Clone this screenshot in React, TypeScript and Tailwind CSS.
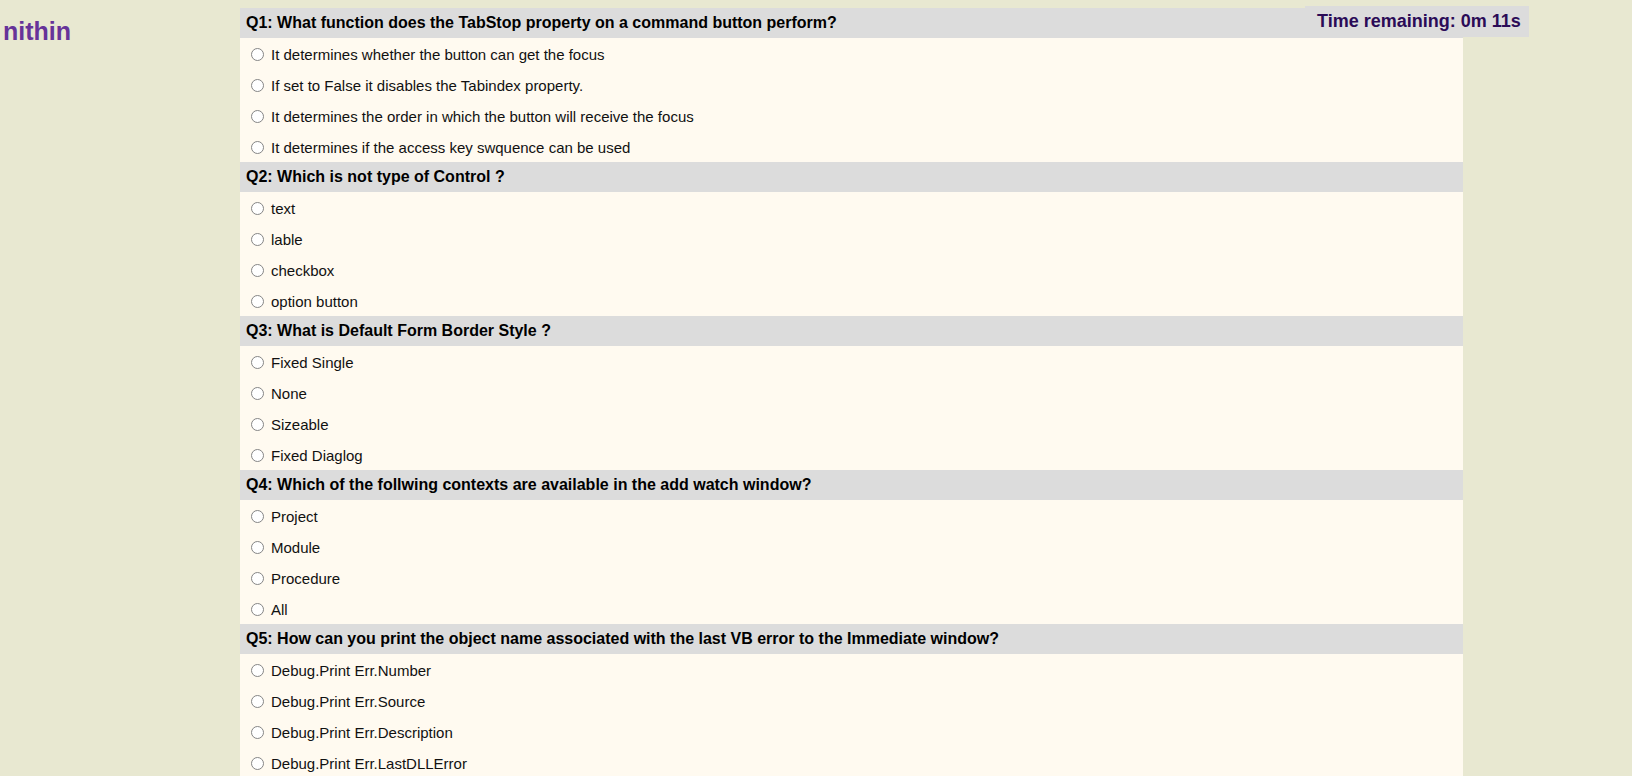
import React from "react";

const questions: { q: string; opts: string[] }[] = [
  {
    q: "Q1: What function does the TabStop property on a command button perform?",
    opts: [
      "It determines whether the button can get the focus",
      "If set to False it disables the Tabindex property.",
      "It determines the order in which the button will receive the focus",
      "It determines if the access key swquence can be used",
    ],
  },
  { q: "Q2: Which is not type of Control ?", opts: ["text", "lable", "checkbox", "option button"] },
  { q: "Q3: What is Default Form Border Style ?", opts: ["Fixed Single", "None", "Sizeable", "Fixed Diaglog"] },
  {
    q: "Q4: Which of the follwing contexts are available in the add watch window?",
    opts: ["Project", "Module", "Procedure", "All"],
  },
  {
    q: "Q5: How can you print the object name associated with the last VB error to the Immediate window?",
    opts: ["Debug.Print Err.Number", "Debug.Print Err.Source", "Debug.Print Err.Description", "Debug.Print Err.LastDLLError"],
  },
];

export default function App() {
  return (
    <div
      className="relative min-h-[776px] w-full bg-[#e8e8d1] text-black"
      style={{ fontFamily: '"Liberation Sans", Arial, sans-serif' }}
    >
      <div className="flex">
        <div className="w-[240px] shrink-0 pl-[3px] pt-[15px]">
          <div className="text-[25px] font-bold leading-[32px] text-[#663399]">nithin</div>
        </div>
        <div className="mt-[8px] w-[1223px] bg-[#fffaf0]">
          {questions.map((qq, i) => (
            <div key={i}>
              <div className="flex h-[30px] items-center bg-[#dcdcdc] pl-[6px] text-[16px] font-bold">{qq.q}</div>
              {qq.opts.map((o, j) => (
                <label key={j} className="flex h-[31px] items-center pl-[11px] text-[15px] text-[#111]">
                  <span className="mr-[7px] mt-[1px] inline-block h-[13px] w-[13px] rounded-full border border-[#858585] bg-white"></span>
                  <span className="mt-[3px]">{o}</span>
                </label>
              ))}
            </div>
          ))}
        </div>
      </div>
      <div className="absolute left-[1305px] top-[6px] flex h-[31px] w-[224px] items-center bg-[#dcdcdc] pl-[12px] text-[18px] font-bold text-[#2b0b57]">
        Time remaining: 0m 11s
      </div>
    </div>
  );
}
